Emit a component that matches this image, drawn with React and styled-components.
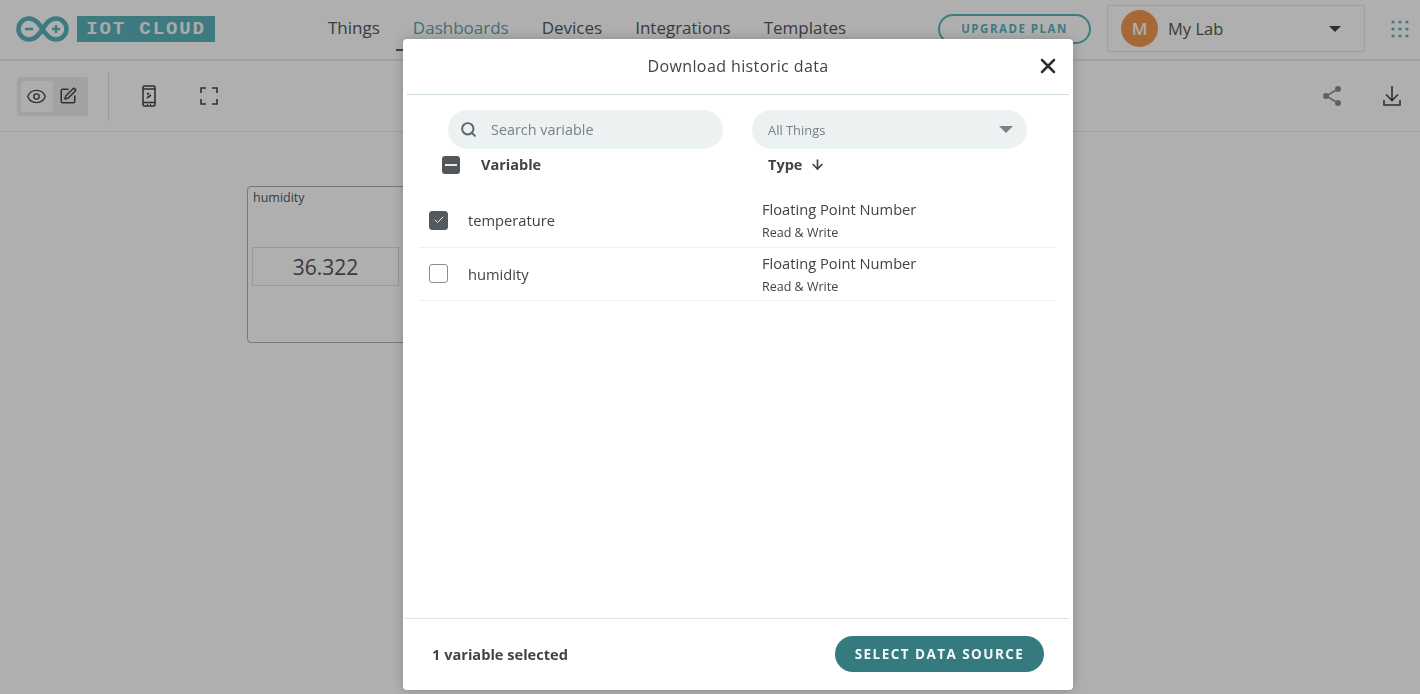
import React from "react"
import styled, { createGlobalStyle } from "styled-components"
import { Eye, SquarePen, Search, X, ArrowDown, Check } from "lucide-react"

const teal = "#58b1b8"
const ink = "#50565a"

const GlobalStyle = createGlobalStyle`
  html, body {
    margin: 0;
    height: 100%;
    overflow: hidden;
    background: #fff;
    font-family: "Open Sans", "Liberation Sans", sans-serif;
  }
`
const Page = styled.div`
  height: 694px;
  display: flex;
  flex-direction: column;
  background: #fbfbfb;
  color: ${ink};
`
const Header = styled.header`
  height: 61px;
  flex: none;
  display: flex;
  align-items: center;
  padding: 0 0 2px 16px;
  border-bottom: 2px solid #e6e6e6;
  box-sizing: border-box;
`
const Brand = styled.div`
  display: flex;
  align-items: center;
  gap: 8px;
  width: 312px;
  flex: none;
`
const LogoText = styled.div`
  width: 138px;
  height: 26px;
  background: ${teal};
  color: #f2f2f2;
  display: flex;
  align-items: center;
  justify-content: center;
  font: bold 19px "Liberation Mono", monospace;
  letter-spacing: 1.9px;
`
const Nav = styled.nav`
  display: flex;
  gap: 33px;
  width: 610px;
  flex: none;
  margin-top: -2px;
`
const NavItem = styled.a`
  position: relative;
  font-size: 17px;
  line-height: 24px;
  color: ${(p) => (p.$active ? "#5aa2a8" : ink)};
`
const NavMark = styled.span`
  position: absolute;
  left: -17px;
  right: -17px;
  top: 33px;
  height: 2px;
  background: #2f6f75;
`
const Upgrade = styled.button`
  width: 153px;
  height: 30px;
  margin-right: 16px;
  border: 2px solid ${teal};
  border-radius: 16px;
  background: transparent;
  color: ${teal};
  font: 700 11.5px "Open Sans", sans-serif;
  letter-spacing: 1.5px;
`
const LabSelect = styled.div`
  width: 258px;
  height: 47px;
  box-sizing: border-box;
  display: flex;
  align-items: center;
  padding: 0 23px 0 13px;
  border: 1px solid #e2e2e2;
  border-radius: 3px;
  font-size: 16.5px;
`
const Avatar = styled.div`
  width: 37px;
  height: 37px;
  border-radius: 50%;
  background: #ee9650;
  color: #f8f8f8;
  display: flex;
  align-items: center;
  justify-content: center;
  font-size: 17px;
  font-weight: 600;
  margin-right: 10px;
`
const Caret = styled.span`
  width: 0;
  height: 0;
  margin-left: auto;
  border-left: ${(p) => p.$w}px solid transparent;
  border-right: ${(p) => p.$w}px solid transparent;
  border-top: ${(p) => p.$h}px solid ${(p) => p.$color};
`
const AppsButton = styled.div`
  margin-left: 26px;
  display: flex;
`
const Toolbar = styled.div`
  height: 71px;
  flex: none;
  box-sizing: border-box;
  display: flex;
  align-items: center;
  padding: 0 19px 0 17px;
  border-bottom: 1px solid #e4e4e4;
`
const ModeSwitch = styled.div`
  width: 71px;
  height: 39px;
  box-sizing: border-box;
  padding: 4px;
  display: flex;
  align-items: center;
  background: #e9e9e9;
  border-radius: 3px;
`
const ModeButton = styled.span`
  width: 32px;
  height: 31px;
  display: flex;
  align-items: center;
  justify-content: center;
  border-radius: 3px;
  background: ${(p) => (p.$on ? "#f8f8f8" : "transparent")};
`
const Divider = styled.span`
  width: 1px;
  height: 49px;
  margin: 0 33px 0 20px;
  background: #dfdfdf;
`
const ToolIcon = styled.span`
  display: flex;
  margin-right: ${(p) => p.$gap || 0}px;
`
const Spacer = styled.div`
  flex: 1;
`
const Canvas = styled.main`
  flex: 1;
  padding: 54px 0 0 247px;
`
const Widget = styled.section`
  width: 170px;
  height: 157px;
  box-sizing: border-box;
  border: 1px solid #a9abab;
  border-radius: 4px;
  padding: 4px;
  display: flex;
  flex-direction: column;
`
const WidgetName = styled.div`
  font-size: 12.5px;
  line-height: 14px;
  margin-left: 1px;
`
const WidgetValue = styled.div`
  margin-top: 42px;
  height: 39px;
  width: 147px;
  box-sizing: border-box;
  border: 1px solid #dcdcdc;
  display: flex;
  align-items: center;
  justify-content: center;
  font-size: 21px;
`
const Backdrop = styled.div`
  position: fixed;
  inset: 0;
  background: rgba(0, 0, 0, 0.3);
`
const Modal = styled.div`
  position: fixed;
  left: 403px;
  top: 39px;
  width: 670px;
  height: 651px;
  background: #fff;
  border-radius: 4px;
  box-shadow: 0 0 12px rgba(0, 0, 0, 0.22);
  display: flex;
  flex-direction: column;
  color: #3f4447;
`
const ModalHead = styled.div`
  height: 56px;
  flex: none;
  box-sizing: border-box;
  margin: 0 4px;
  border-bottom: 1px solid #cfdcdc;
  display: flex;
  align-items: center;
  justify-content: center;
  position: relative;
  font-size: 16px;
  letter-spacing: 0.4px;
  padding-bottom: 2px;
`
const CloseButton = styled.span`
  position: absolute;
  right: 9px;
  top: 15px;
  display: flex;
  color: #2b2f31;
`
const Filters = styled.div`
  display: flex;
  gap: 29px;
  padding: 15px 0 0 45px;
  flex: none;
`
const Pill = styled.div`
  width: 275px;
  height: 39px;
  box-sizing: border-box;
  display: flex;
  align-items: center;
  border-radius: 20px;
  background: #ecf1f1;
  padding: 0 ${(p) => (p.$select ? 14 : 12)}px 0 ${(p) => (p.$select ? 16 : 12)}px;
  color: #7a8285;
  font-size: ${(p) => (p.$select ? 12.9 : 14.4)}px;
`
const SearchIcon = styled(Search)`
  margin-right: 14px;
  color: #5e6669;
`
const TableHead = styled.div`
  height: 45px;
  flex: none;
  display: flex;
  align-items: flex-start;
  padding: 5px 0 0 39px;
  box-sizing: border-box;
  font-size: 14.5px;
  font-weight: 700;
  line-height: 21px;
`
const MixedBox = styled.span`
  width: 18px;
  height: 18px;
  border-radius: 3px;
  background: #50565a;
  display: flex;
  align-items: center;
  justify-content: center;
  margin: 2px 21px 0 0;
  &::after {
    content: "";
    width: 12px;
    height: 2px;
    background: #e8e8e8;
  }
`
const HeadName = styled.span`
  width: 287px;
`
const HeadType = styled.span`
  display: flex;
  align-items: center;
  gap: 8px;
`
const Rows = styled.div`
  flex: 1;
  padding: 0 17px 0 16px;
`
const Row = styled.div`
  height: 53.5px;
  box-sizing: border-box;
  border-bottom: 1px solid #edf1f1;
  display: flex;
  align-items: center;
  padding: 0 0 0 10px;
`
const RowBox = styled.span`
  width: 19px;
  height: 19px;
  box-sizing: border-box;
  border-radius: 3px;
  margin-right: 20px;
  display: flex;
  align-items: center;
  justify-content: center;
  color: #e8e8e8;
  background: ${(p) => (p.$checked ? "#53595d" : "#fff")};
  border: 1px solid ${(p) => (p.$checked ? "#53595d" : "#888e90")};
`
const RowName = styled.span`
  width: 294px;
  font-size: 14.7px;
`
const RowInfo = styled.div`
  padding-top: 2px;
`
const RowType = styled.div`
  font-size: 14.7px;
  line-height: 18px;
`
const RowAccess = styled.div`
  font-size: 12.5px;
  line-height: 18px;
  margin-top: 6px;
`
const Footer = styled.div`
  height: 72px;
  flex: none;
  box-sizing: border-box;
  margin: 0 4px 0 2px;
  border-top: 1px solid #dce3e5;
  display: flex;
  align-items: center;
  justify-content: space-between;
  padding: 0 25px 2px 27px;
  font-size: 14.6px;
  font-weight: 700;
`
const PrimaryButton = styled.button`
  width: 209px;
  height: 36px;
  border: 0;
  border-radius: 18px;
  background: #347a7e;
  color: #f4f8f8;
  font: 700 13.5px "Open Sans", sans-serif;
  letter-spacing: 1.45px;
`

const ArduinoLogo = () => (
  <svg width="53" height="26" viewBox="0 0 53 26" fill="none" stroke={teal} strokeWidth="4.6">
    <path d="M26.5 13C23 7.5 19.5 2.5 13 2.5a10.5 10.5 0 0 0 0 21c6.5 0 10-5 13.5-10.5 3.5-5.5 7-10.5 13.5-10.5a10.5 10.5 0 0 1 0 21c-6.5 0-10-5-13.5-10.5Z" />
    <path d="M9 13h8M36 13h8M40 9v8" strokeWidth="2.4" />
  </svg>
)

const AppsIcon = () => (
  <svg width="18" height="18" viewBox="0 0 18 18" fill={teal}>
    {[2, 9, 16].map((y) =>
      [2, 9, 16].map((x) => <circle key={`${x}-${y}`} cx={x} cy={y} r="1.6" />)
    )}
  </svg>
)

const PhoneIcon = () => (
  <svg width="14" height="22" viewBox="0 0 14 22" fill="none" stroke="#42474a" strokeWidth="1.6">
    <rect x="1" y="1" width="12" height="20" rx="1.5" />
    <path d="M1 4h12M1 17.5h12M5 9.5l2-1.5M5 13l4-3" />
    <path d="M5 19.5h1M8 19.5h1" />
  </svg>
)

const FullscreenIcon = () => (
  <svg width="18" height="18" viewBox="0 0 18 18" fill="none" stroke="#42474a" strokeWidth="1.6">
    <path d="M1 6V1h5M12 1h5v5M17 12v5h-5M6 17H1v-5" />
  </svg>
)

const ShareIcon = () => (
  <svg width="18" height="20" viewBox="0 0 18 20" fill="#858a8c" stroke="#858a8c" strokeWidth="1.5">
    <circle cx="15" cy="3" r="2.2" />
    <circle cx="3" cy="10" r="2.2" />
    <circle cx="15" cy="17" r="2.2" />
    <path d="M15 3 3 10l12 7" fill="none" />
  </svg>
)

const DownloadIcon = () => (
  <svg width="18" height="20" viewBox="0 0 18 20" fill="none" stroke="#42474a" strokeWidth="1.6">
    <path d="M9 0v14M3 8.5l6 6 6-6M1 14v5h16v-5" />
  </svg>
)

const nav = ["Things", "Dashboards", "Devices", "Integrations", "Templates"]
const rows = [
  { name: "temperature", checked: true },
  { name: "humidity", checked: false },
]

export default function App() {
  return (
    <>
      <GlobalStyle />
      <Page>
        <Header>
          <Brand>
            <ArduinoLogo />
            <LogoText>IOT CLOUD</LogoText>
          </Brand>
          <Nav>
            {nav.map((item) => (
              <NavItem key={item} $active={item === "Dashboards"}>
                {item}
                {item === "Dashboards" && <NavMark />}
              </NavItem>
            ))}
          </Nav>
          <Upgrade>UPGRADE PLAN</Upgrade>
          <LabSelect>
            <Avatar>M</Avatar>
            My Lab
            <Caret $w={6} $h={6} $color="#3f4447" />
          </LabSelect>
          <AppsButton>
            <AppsIcon />
          </AppsButton>
        </Header>
        <Toolbar>
          <ModeSwitch>
            <ModeButton $on>
              <Eye size={21} strokeWidth={1.6} color="#42474a" />
            </ModeButton>
            <ModeButton>
              <SquarePen size={18} strokeWidth={2.1} color="#42474a" />
            </ModeButton>
          </ModeSwitch>
          <Divider />
          <ToolIcon $gap={44}>
            <PhoneIcon />
          </ToolIcon>
          <ToolIcon>
            <FullscreenIcon />
          </ToolIcon>
          <Spacer />
          <ToolIcon $gap={42}>
            <ShareIcon />
          </ToolIcon>
          <ToolIcon>
            <DownloadIcon />
          </ToolIcon>
        </Toolbar>
        <Canvas>
          <Widget>
            <WidgetName>humidity</WidgetName>
            <WidgetValue>36.322</WidgetValue>
          </Widget>
        </Canvas>
      </Page>
      <Backdrop />
      <Modal>
        <ModalHead>
          Download historic data
          <CloseButton>
            <X size={24} strokeWidth={2.5} />
          </CloseButton>
        </ModalHead>
        <Filters>
          <Pill>
            <SearchIcon size={17} strokeWidth={2.8} />
            Search variable
          </Pill>
          <Pill $select>
            All Things
            <Caret $w={7} $h={7} $color="#7a8285" />
          </Pill>
        </Filters>
        <TableHead>
          <MixedBox />
          <HeadName>Variable</HeadName>
          <HeadType>
            Type
            <ArrowDown size={15} strokeWidth={2.7} />
          </HeadType>
        </TableHead>
        <Rows>
          {rows.map((row) => (
            <Row key={row.name}>
              <RowBox $checked={row.checked}>
                {row.checked && <Check size={12} strokeWidth={2} />}
              </RowBox>
              <RowName>{row.name}</RowName>
              <RowInfo>
                <RowType>Floating Point Number</RowType>
                <RowAccess>Read &amp; Write</RowAccess>
              </RowInfo>
            </Row>
          ))}
        </Rows>
        <Footer>
          1 variable selected
          <PrimaryButton>SELECT DATA SOURCE</PrimaryButton>
        </Footer>
      </Modal>
    </>
  )
}
